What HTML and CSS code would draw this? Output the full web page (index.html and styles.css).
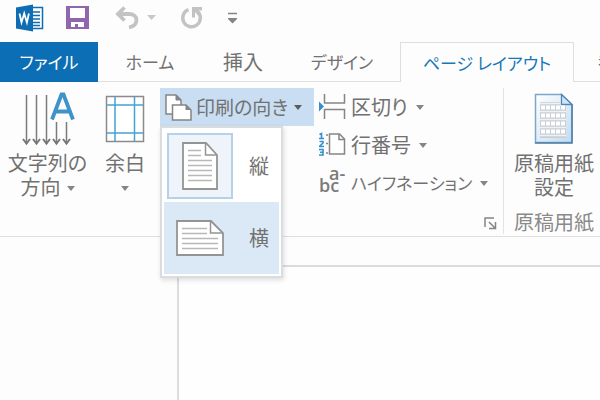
FILE: index.html
```html
<!DOCTYPE html>
<html lang="ja">
<head>
<meta charset="utf-8">
<title>ページ レイアウト</title>
<link rel="stylesheet" href="styles.css">
</head>
<body>
<header class="quick-access">
  <svg class="word-logo" width="28" height="28" viewBox="0 0 28 28" aria-hidden="true">
    <rect x="14" y="3.500" width="12.500" height="21" fill="#fff" stroke="#0e6db3" stroke-width="1.500"/>
    <path d="M17 8h7M17 11.500h7M17 15h7M17 18.500h7M17 21.500h7" stroke="#0e6db3" stroke-width="1.500"/>
    <path d="M0 3.500 17 .5v27L0 24.500z" fill="#0e6db3"/>
    <path d="m3.500 9.500 2 9 2.700-9 2.700 9 2-9" fill="none" stroke="#fff" stroke-width="1.800"/>
  </svg>
  <button class="quick-button save" aria-label="上書き保存">
    <svg width="24" height="24" viewBox="0 0 24 24">
      <path d="M0 0h23v23H0z" fill="#9067ae"/>
      <path d="M4 2h15v10H4zM5 16h13v5h-6v-3H9v3H5z" fill="#fff"/>
    </svg>
  </button>
  <button class="quick-button undo" aria-label="元に戻す">
    <svg width="42" height="24" viewBox="0 0 42 24">
      <path d="M10.500 1.500 4 8l6.500 6.500M4.500 8H15c4.500 0 7.500 2.500 7.500 6s-2.500 6.500-7.500 7.500" fill="none" stroke="#c3c3c3" stroke-width="3.800"/>
      <path d="M33 9h9l-4.500 5z" fill="#c8c8c8"/>
    </svg>
  </button>
  <button class="quick-button redo" aria-label="繰り返し">
    <svg width="24" height="24" viewBox="0 0 24 24">
      <path d="M8.500 3.700A8.800 8.800 0 1 0 18 6" fill="none" stroke="#c3c3c3" stroke-width="3.400"/>
      <path d="M12 1h10v3.500h-3.500l2.500 3-2.500 2.500-3.500-4v5.500h-3z" fill="#c3c3c3"/>
    </svg>
  </button>
  <button class="quick-button" aria-label="クイック アクセスのカスタマイズ">
    <svg width="10" height="12" viewBox="0 0 10 12">
      <path d="M0 1.500h9" stroke="#858585" stroke-width="1.500"/><path d="M0 6h9v1L4.500 11.500 0 7z" fill="#858585"/>
    </svg>
  </button>
</header>
<nav class="tabs">
  <button class="tab file kana">ファイル</button>
  <button class="tab home kana">ホーム</button>
  <button class="tab insert">挿入</button>
  <button class="tab design kana">デザイン</button>
  <button class="tab active kana">ページ レイアウト</button>
  <button class="tab next">参考資料</button>
</nav>
<section class="ribbon">
  <div class="group page-setup">
    <button class="large direction">
      <svg width="54" height="55" viewBox="0 0 54 55" aria-hidden="true">
        <path d="M5.500 3v49M15.500 3v49M25.500 3v49M35.500 30v22M45.500 30v22" stroke="#7b7b7b" stroke-width="1.500"/>
        <path d="m2 47 3.500 4.500L9 47M12 47l3.500 4.500L19 47M22 47l3.500 4.500L29 47M32 47l3.500 4.500L39 47M42 47l3.500 4.500L49 47" fill="none" stroke="#777" stroke-width="2"/>
        <path d="m31 27.500 9.500-25h2l9.500 25M34.500 19.500h14" fill="none" stroke="#3d93ca" stroke-width="3.800"/>
      </svg>
      <span>文字列の<br>方向<i class="caret"></i></span>
    </button>
    <button class="large margins">
      <svg width="40" height="55" viewBox="0 0 40 55" aria-hidden="true">
        <path d="M1.500 4.500h37v45h-37z" fill="#fff" stroke="#8b8b8b" stroke-width="1.500"/>
        <path d="M10 5v44M29.500 5v44M2 13h36M2 41h36" stroke="#43a3d3" stroke-width="1.500"/>
      </svg>
      <span>余白<br><i class="caret"></i></span>
    </button>
    <div class="orientation">
      <button class="small open" aria-expanded="true">
        <svg width="27" height="27" viewBox="0 0 27 27" aria-hidden="true">
          <path d="M1 1h10l5 5v14H1z" fill="#fff" stroke="#858585" stroke-width="1.500"/>
          <path d="M11 1v5h5z" fill="#858585" stroke="#858585"/>
          <path d="M7.500 11H21l5 5v10H7.500z" fill="#fff" stroke="#858585" stroke-width="1.500"/>
          <path d="M20.500 11v5H26z" fill="#858585"/>
        </svg>
        <span>印刷の向き</span><i class="caret dark"></i>
      </button>
      <div class="menu">
        <button class="choice">
          <span class="preview selected">
            <svg width="36" height="48" viewBox="0 0 36 48" aria-hidden="true">
              <path d="M1 1h23l11 12v34H1z" fill="#fff" stroke="#949494" stroke-width="1.800"/>
              <path d="M23.500 1v12H35" fill="none" stroke="#949494" stroke-width="1.500"/>
              <path d="M6 8.500h13M6 13.500h13M6 18.500h24M6 23.500h24M6 28.500h24M6 33.500h24M6 38.500h24" stroke="#b8b8b8" stroke-width="1.300"/>
            </svg>
          </span>
          <span>縦</span>
        </button>
        <button class="choice hover">
          <span class="preview">
            <svg width="48" height="36" viewBox="0 0 48 36" aria-hidden="true">
              <path d="M1 1h34l12 12v22H1z" fill="#fff" stroke="#949494" stroke-width="1.800"/>
              <path d="M34.500 1v12H47" fill="none" stroke="#949494" stroke-width="1.500"/>
              <path d="M6 8.500h25M6 13.500h25M6 18.500h36M6 23.500h36M6 28.500h36" stroke="#b8b8b8" stroke-width="1.300"/>
            </svg>
          </span>
          <span>横</span>
        </button>
      </div>
    </div>
    <div class="stack">
      <button class="small">
        <svg width="30" height="28" viewBox="0 0 30 28" aria-hidden="true">
          <path d="M5.500 1v9h20V1M5.500 26V16.500h20V26" fill="none" stroke="#858585" stroke-width="1.500"/>
          <path d="m0 8.500 5 5-5 5z" fill="#3290cb"/>
        </svg>
        <span>区切り</span><i class="caret"></i>
      </button>
      <button class="small">
        <svg width="30" height="28" viewBox="0 0 30 28" aria-hidden="true">
          <path d="M10.500 3h10l5 5v15h-15z" fill="#fff" stroke="#858585" stroke-width="1.500"/>
          <path d="M20 3v5.500h5.500" fill="none" stroke="#858585" stroke-width="1.500"/>
          <path d="M.5 3.500 2.500 2.500v5M0 7.500h5M.5 10.500H4V12L.5 15.500H5M0 18.500h4V24H0M1 21.200h3" fill="none" stroke="#3290cb" stroke-width="1.600"/>
          <path d="M7 4h2M7 12.500h2M7 22h2" stroke="#858585" stroke-width="1.500"/>
        </svg>
        <span>行番号</span><i class="caret"></i>
      </button>
      <button class="small">
        <svg class="hyphen-icon" width="30" height="28" viewBox="0 0 30 28" aria-hidden="true">
          <text x="0" y="23">bc</text><text x="10" y="11">a-</text>
        </svg>
        <span class="kana">ハイフネーション</span><i class="caret"></i>
      </button>
    </div>
    <button class="launcher" aria-label="ページ設定">
      <svg width="13" height="13" viewBox="0 0 13 13">
        <path d="M1 10V1h9M5 5l6 6M11.500 5v6.500H5" fill="none" stroke="#858585" stroke-width="1.500"/>
      </svg>
    </button>
  </div>
  <div class="group manuscript">
    <button class="large">
      <svg width="40" height="55" viewBox="0 0 40 55" aria-hidden="true">
        <defs><linearGradient id="sheet" x1="0" y1="0" x2="1" y2="1"><stop offset="0" stop-color="#fff"/><stop offset="1" stop-color="#c1dbf1"/></linearGradient></defs>
        <path d="M1.500 2.500h26l10.500 10v38H1.500z" fill="url(#sheet)" stroke="#7ba7cb" stroke-width="1.500"/>
        <path d="M1 51h37V13" fill="none" stroke="#4f7fa6" stroke-width="1.500"/>
        <path d="M27.500 2.500v10H38z" fill="#d2e6f7" stroke="#4f86b3" stroke-width="1.300"/>
        <path d="M6 10h20v4h6v32H6z" fill="#c9ced5"/>
        <path d="M7 15.500h25M7 23.500h25M7 31.500h25M7 39.500h25" stroke="#fff" stroke-width="4" stroke-dasharray="4 1"/>
        <path d="M6 11.500h20M6 19.500h26M6 27.500h26M6 35.500h26M6 43.500h26" stroke="#eef2f6" stroke-width="1.500"/>
      </svg>
      <span>原稿用紙<br>設定</span>
    </button>
    <div class="group-name">原稿用紙</div>
  </div>
</section>
<main class="workspace"><div class="paper"></div></main>
</body>
</html>
```
FILE: styles.css
```css
* { box-sizing: border-box; }

body {
  margin: 0;
  min-height: 100vh;
  display: flex;
  flex-direction: column;
  overflow: hidden;
  background: #fdfdfd;
  color: #717171;
  font: 20px/24px "Noto Sans CJK JP", sans-serif;
  font-feature-settings: "palt";
}

button {
  padding: 0;
  border: 0;
  background: none;
  color: inherit;
  font: inherit;
  font-feature-settings: inherit;
  white-space: nowrap;
}

svg { display: block; flex: none; }

.quick-access {
  display: flex;
  align-items: center;
  height: 42px;
  padding: 0 16px 6px;
}
.save { margin-left: 22px; }
.undo { margin-left: 24px; }
.redo { margin: 0 24px 0 24px; }

.kana { font-size: 17px; }

.tabs {
  display: flex;
  height: 40px;
  overflow: hidden;
  box-shadow: inset 0 -1px #dedede;
}
.tab { flex: none; }
.file { width: 98px; background: #0c6fb5; color: #fff; }
.home { width: 104px; }
.insert { width: 82px; }
.design { width: 116px; }
.active {
  width: 174px;
  border: 1px solid #dedede;
  border-bottom: 0;
  background: #fdfdfd;
  color: #1777b8;
}
.next { margin-left: 24px; }

.ribbon {
  display: flex;
  padding: 6px 0 2px;
  border-bottom: 1px solid #dedede;
}
.group { display: flex; }
.page-setup {
  position: relative;
  width: 504px;
  flex: none;
  border-right: 1px solid #e3e3e3;
}

.large {
  display: flex;
  flex: none;
  flex-direction: column;
  align-items: center;
  align-self: flex-start;
  gap: 4px;
  padding-top: 4px;
}
.direction { width: 95px; }
.margins { width: 60px; }

.caret {
  display: inline-block;
  flex: none;
  border: 4px solid transparent;
  border-top: 5px solid #858585;
  border-bottom: 0;
  margin-left: 6px;
  vertical-align: 4px;
}
.margins .caret { margin-left: 0; }
.caret.dark { border-top-color: #5c5c5c; }

.small {
  display: flex;
  align-items: center;
  height: 38px;
}
.orientation { position: relative; flex: none; margin-left: 5px; }
.open {
  width: 154px;
  padding-left: 5px;
  gap: 4px;
  background: #c9def2;
  font-size: 19px;
}
.open .caret { margin-left: 2px; }

.menu {
  position: absolute;
  top: 38px;
  left: 0;
  width: 123px;
  padding: 2px;
  border: 2px solid #dadcde;
  background: #fff;
  box-shadow: 1px 2px 5px #0002;
}
.choice {
  display: flex;
  align-items: center;
  gap: 16px;
  width: 100%;
  height: 72px;
  padding-left: 3px;
}
.hover { background: #dbe9f6; }
.preview {
  display: grid;
  place-items: center;
  width: 66px;
  height: 66px;
}
.selected { border: 2px solid #b3d2ec; background: #eff4fa; }

.stack { flex: none; margin-left: 5px; }
.stack .small { gap: 2px; }
.hyphen-icon {
  overflow: visible;
  fill: #7b7b7b;
  font: 600 18px "Open Sans", sans-serif;
}

.launcher { position: absolute; right: 6px; bottom: 4px; }

.manuscript {
  flex-direction: column;
  align-items: center;
  width: 100px;
  flex: none;
}
.manuscript .large { align-self: center; }
.group-name { margin-top: 11px; color: #8a8a8a; }

.workspace {
  display: flex;
  flex: 1;
  padding: 28px 0 0 177px;
}
.paper {
  flex: 1;
  border: solid #dcdcdc;
  border-width: 2px 0 0 2px;
  background: #fefefe;
}
```
